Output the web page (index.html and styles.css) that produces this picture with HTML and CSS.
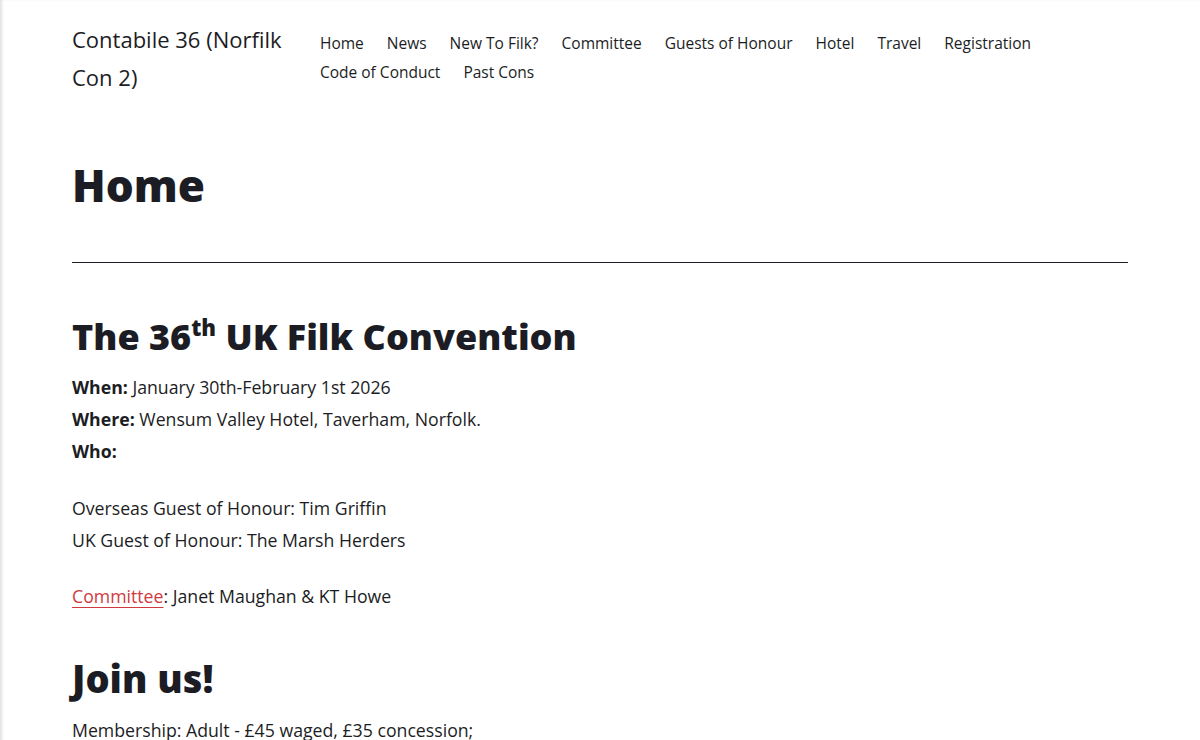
FILE: index.html
```html
<!DOCTYPE html>
<html lang="en">
<head>
  <meta charset="UTF-8">
  <meta name="viewport" content="width=device-width, initial-scale=1.0">
  <title>Contabile 36 (Norfilk Con 2)</title>
  <link rel="stylesheet" href="styles.css">
</head>
<body>
  <div class="site">
    <header class="site-header">
      <p class="site-title">Contabile 36 (Norfilk Con 2)</p>
      <nav class="primary-nav">
        <ul class="menu">
          <li><a href="#">Home</a></li>
          <li><a href="#">News</a></li>
          <li><a href="#">New To Filk?</a></li>
          <li><a href="#">Committee</a></li>
          <li><a href="#">Guests of Honour</a></li>
          <li><a href="#">Hotel</a></li>
          <li><a href="#">Travel</a></li>
          <li><a href="#">Registration</a></li>
          <li><a href="#">Code of Conduct</a></li>
          <li><a href="#">Past Cons</a></li>
        </ul>
      </nav>
    </header>

    <main class="site-main">
      <header class="entry-header">
        <h1 class="entry-title">Home</h1>
      </header>

      <div class="entry-content">
        <h2>The 36<sup>th</sup> UK Filk Convention</h2>
        <p>
          <strong>When:</strong> January 30th-February 1st 2026<br>
          <strong>Where:</strong> Wensum Valley Hotel, Taverham, Norfolk.<br>
          <strong>Who:</strong>
        </p>
        <p>
          Overseas Guest of Honour: Tim Griffin<br>
          UK Guest of Honour: The Marsh Herders
        </p>
        <p><a href="#">Committee</a>: Janet Maughan &amp; KT Howe</p>

        <h2 class="join">Join us!</h2>
        <p>Membership: Adult - £45 waged, £35 concession;</p>
      </div>
    </main>
  </div>
</body>
</html>
```

FILE: styles.css
```css
:root {
  --text: #1c1d24;
  --link: #cf3a3f;
  --gutter: 72px;
}

* {
  box-sizing: border-box;
}

body {
  margin: 0;
  background: #fff;
  color: var(--text);
  font-family: "Open Sans", "Noto Sans", sans-serif;
  font-size: 17.7px;
  line-height: 32px;
  box-shadow: inset 3px 0 3px -1px rgba(0, 0, 0, 0.12);
  min-height: 100vh;
}

a {
  color: inherit;
  text-decoration: none;
}

/* Header */
.site-header {
  display: flex;
  align-items: flex-start;
  padding: 20px var(--gutter) 0;
}

.site-title {
  flex: 0 0 225px;
  margin: 0;
  font-size: 22px;
  line-height: 38px;
}

.primary-nav {
  margin-left: 23px;
  padding-top: 9px;
}

.menu {
  display: flex;
  flex-wrap: wrap;
  column-gap: 23px;
  margin: 0;
  padding: 0;
  list-style: none;
  font-size: 15.5px;
  line-height: 29px;
}

/* Main */
.site-main {
  padding: 0 var(--gutter);
}

.entry-header {
  padding-top: 61px;
  padding-bottom: 49px;
  border-bottom: 1px solid #1c1d24;
}

.entry-title {
  margin: 0;
  font-size: 44px;
  line-height: 56px;
  font-weight: 800;
}

.entry-content h2 {
  margin: 52px 0 12px;
  font-size: 36px;
  line-height: 44px;
  font-weight: 800;
}

.entry-content h2 sup {
  font-size: 22px;
  line-height: 0;
  vertical-align: 14px;
}

.entry-content h2.join {
  margin-top: 44px;
  margin-bottom: 14px;
  font-size: 38px;
}

.entry-content p {
  margin: 0 0 24px;
}

.entry-content p:first-of-type {
  margin-bottom: 25px;
}

.entry-content strong {
  font-weight: 700;
}

.entry-content p a {
  color: var(--link);
  text-decoration: underline;
  text-decoration-thickness: 1px;
  text-underline-offset: 4px;
}
```
